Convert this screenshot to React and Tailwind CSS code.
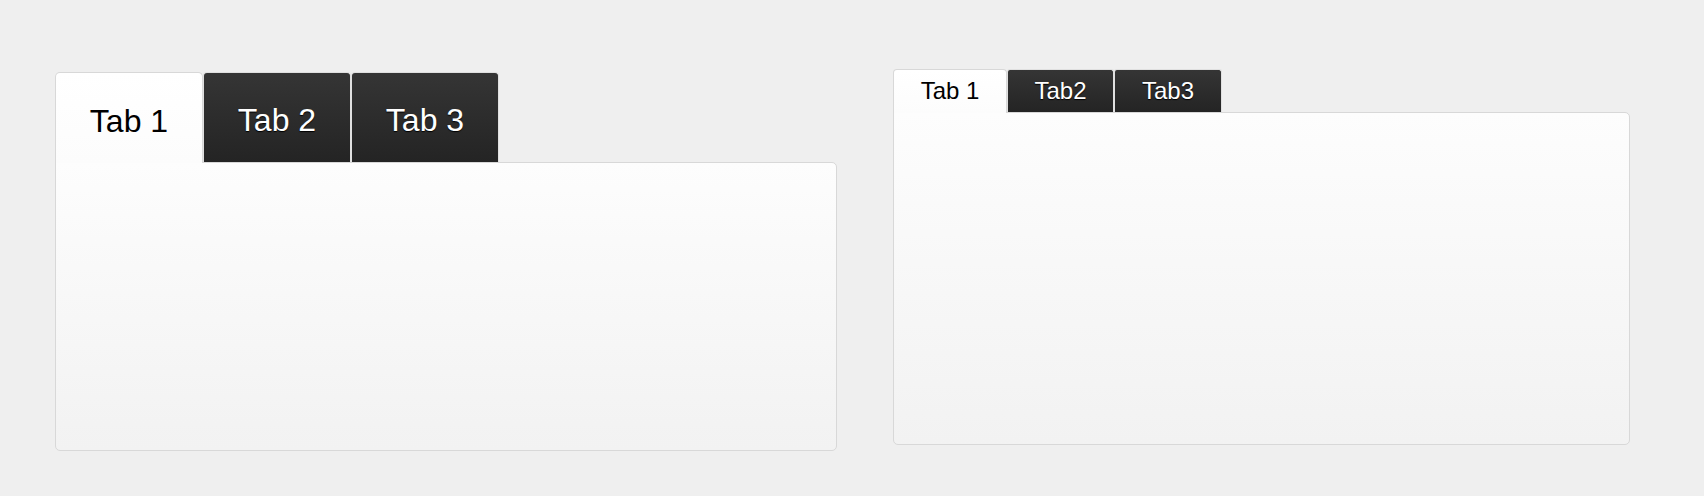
import React, { useState } from 'react';

const font = { fontFamily: '"Liberation Sans", Arial, sans-serif' };

const BigTabs = () => {
  const [active, setActive] = useState(0);
  const tabs = ['Tab 1', 'Tab 2', 'Tab 3'];

  return (
    <div className="w-[782px] shrink-0">
      <div className="flex items-end">
        {tabs.map((t, i) =>
          i === active ? (
            <button
              key={t}
              onClick={() => setActive(i)}
              className="relative z-10 -mb-px h-[91px] w-[148px] rounded-t-[5px] border border-b-0 border-[#d8d8d8] bg-gradient-to-b from-white to-[#fcfcfc] pt-[5px] text-[32px] text-black"
            >
              {t}
            </button>
          ) : (
            <button
              key={t}
              onClick={() => setActive(i)}
              className="h-[90px] w-[148px] rounded-t-[4px] border border-b-0 border-[#e0e0e0] bg-gradient-to-b from-[#353535] to-[#242424] pt-[4px] text-[32px] text-white [text-shadow:0_1px_1px_#000]"
            >
              {t}
            </button>
          )
        )}
      </div>
      <div className="h-[289px] rounded-b-[5px] rounded-tr-[5px] border border-[#d8d8d8] bg-gradient-to-b from-[#fdfdfd] to-[#f2f2f2]" />
    </div>
  );
};

const SmallTabs = () => {
  const [active, setActive] = useState(0);
  const tabs = [
    { label: 'Tab 1', w: 'w-[114px]' },
    { label: 'Tab2', w: 'w-[107px]' },
    { label: 'Tab3', w: 'w-[108px]' },
  ];

  return (
    <div className="w-[737px] shrink-0">
      <div className="flex items-end">
        {tabs.map((t, i) =>
          i === active ? (
            <button
              key={t.label}
              onClick={() => setActive(i)}
              className={`${t.w} relative z-10 -mb-px h-[44px] rounded-t-[4px] border border-b-0 border-[#d8d8d8] bg-gradient-to-b from-white to-[#fcfcfc] pb-px text-[24px] text-black`}
            >
              {t.label}
            </button>
          ) : (
            <button
              key={t.label}
              onClick={() => setActive(i)}
              className={`${t.w} h-[43px] rounded-t-[3px] border border-b-0 border-[#e0e0e0] bg-gradient-to-b from-[#353535] to-[#242424] text-[24px] text-white [text-shadow:0_1px_1px_#000]`}
            >
              {t.label}
            </button>
          )
        )}
      </div>
      <div className="h-[333px] rounded-b-[5px] rounded-tr-[5px] border border-[#d8d8d8] bg-gradient-to-b from-[#fdfdfd] to-[#f2f2f2]" />
    </div>
  );
};

export default function App() {
  return (
    <div className="h-[496px] w-full bg-[#efefef]" style={font}>
      <div className="flex items-start gap-[56px] pl-[55px] pt-[69px]">
        <div className="pt-[3px]">
          <BigTabs />
        </div>
        <SmallTabs />
      </div>
    </div>
  );
}
